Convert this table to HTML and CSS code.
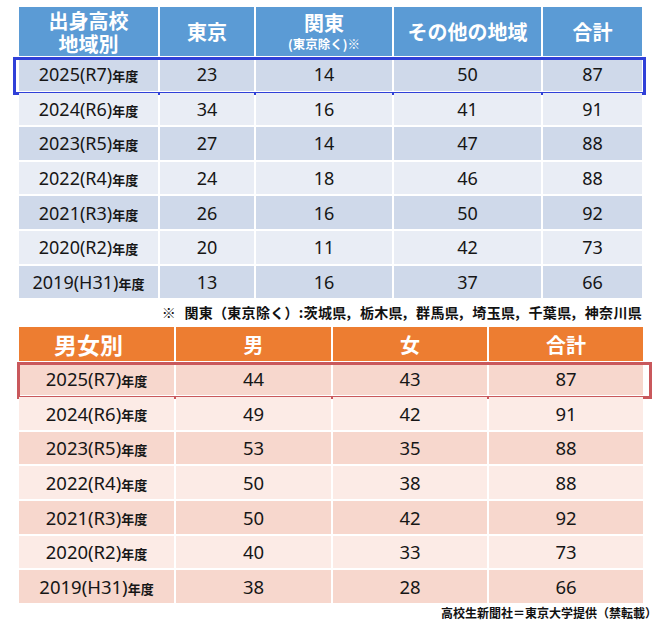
FILE: index.html
```html
<!DOCTYPE html>
<html lang="ja">
<head>
<meta charset="utf-8">
<title>出身高校地域別・男女別</title>
<link rel="stylesheet" href="styles.css">
</head>
<body>
<div class="page">
  <section class="tbl region">
    <div class="row head">
      <div class="cell"><span class="two"><span class="ln">出身高校</span><span class="ln">地域別</span></span></div>
      <div class="cell">東京</div>
      <div class="cell"><span class="two"><span class="ln">関東</span><small>(東京除く)※</small></span></div>
      <div class="cell">その他の地域</div>
      <div class="cell">合計</div>
    </div>
    <div class="row dark hl">
      <div class="cell">2025(R7)<span class="nendo">年度</span></div>
      <div class="cell">23</div><div class="cell">14</div><div class="cell">50</div><div class="cell">87</div>
    </div>
    <div class="row light">
      <div class="cell">2024(R6)<span class="nendo">年度</span></div>
      <div class="cell">34</div><div class="cell">16</div><div class="cell">41</div><div class="cell">91</div>
    </div>
    <div class="row dark">
      <div class="cell">2023(R5)<span class="nendo">年度</span></div>
      <div class="cell">27</div><div class="cell">14</div><div class="cell">47</div><div class="cell">88</div>
    </div>
    <div class="row light">
      <div class="cell">2022(R4)<span class="nendo">年度</span></div>
      <div class="cell">24</div><div class="cell">18</div><div class="cell">46</div><div class="cell">88</div>
    </div>
    <div class="row dark">
      <div class="cell">2021(R3)<span class="nendo">年度</span></div>
      <div class="cell">26</div><div class="cell">16</div><div class="cell">50</div><div class="cell">92</div>
    </div>
    <div class="row light">
      <div class="cell">2020(R2)<span class="nendo">年度</span></div>
      <div class="cell">20</div><div class="cell">11</div><div class="cell">42</div><div class="cell">73</div>
    </div>
    <div class="row dark">
      <div class="cell">2019(H31)<span class="nendo">年度</span></div>
      <div class="cell">13</div><div class="cell">16</div><div class="cell">37</div><div class="cell">66</div>
    </div>
  </section>

  <p class="note">※ 関東（東京除く）:茨城県, 栃木県, 群馬県, 埼玉県, 千葉県, 神奈川県</p>

  <section class="tbl gender">
    <div class="row head">
      <div class="cell big">男女別</div>
      <div class="cell">男</div>
      <div class="cell">女</div>
      <div class="cell">合計</div>
    </div>
    <div class="row dark hl">
      <div class="cell">2025(R7)<span class="nendo">年度</span></div>
      <div class="cell">44</div><div class="cell">43</div><div class="cell">87</div>
    </div>
    <div class="row light">
      <div class="cell">2024(R6)<span class="nendo">年度</span></div>
      <div class="cell">49</div><div class="cell">42</div><div class="cell">91</div>
    </div>
    <div class="row dark">
      <div class="cell">2023(R5)<span class="nendo">年度</span></div>
      <div class="cell">53</div><div class="cell">35</div><div class="cell">88</div>
    </div>
    <div class="row light">
      <div class="cell">2022(R4)<span class="nendo">年度</span></div>
      <div class="cell">50</div><div class="cell">38</div><div class="cell">88</div>
    </div>
    <div class="row dark">
      <div class="cell">2021(R3)<span class="nendo">年度</span></div>
      <div class="cell">50</div><div class="cell">42</div><div class="cell">92</div>
    </div>
    <div class="row light">
      <div class="cell">2020(R2)<span class="nendo">年度</span></div>
      <div class="cell">40</div><div class="cell">33</div><div class="cell">73</div>
    </div>
    <div class="row dark">
      <div class="cell">2019(H31)<span class="nendo">年度</span></div>
      <div class="cell">38</div><div class="cell">28</div><div class="cell">66</div>
    </div>
  </section>

  <p class="credit">高校生新聞社＝東京大学提供（禁転載）</p>
</div>
</body>
</html>
```

FILE: styles.css
```css
* { box-sizing: border-box; }

body {
  margin: 0;
  background: #ffffff;
  font-family: "Noto Sans", "Noto Sans CJK JP", sans-serif;
  color: #161616;
}

.page {
  width: 660px;
  padding: 7px 0 0 19px;
}

.tbl {
  display: flex;
  flex-direction: column;
  gap: 2px;
}

.row {
  position: relative;
  display: grid;
  column-gap: 2px;
  height: 32.6px;
}

.region { width: 623px; }
.region .row { grid-template-columns: 139px 94px 136px 147px 99px; }
.region .row.head { height: 49px; }

.gender { width: 624px; }
.gender .row { grid-template-columns: 155px 155px 154px 154px; height: 32.7px; }
.gender .row.head { height: 33px; }

.cell {
  display: flex;
  align-items: center;
  justify-content: center;
  font-size: 18px;
  white-space: nowrap;
}

.gender .cell { font-size: 18.5px; }

.nendo {
  font-family: "Noto Sans CJK JP", sans-serif;
  font-size: 13px;
  font-weight: 700;
  margin-top: 3px;
}

.head .cell {
  color: #ffffff;
  font-family: "Noto Sans CJK JP", sans-serif;
  font-weight: 700;
  font-size: 20px;
}

.head .two {
  display: flex;
  flex-direction: column;
  align-items: center;
}

.head .ln {
  display: block;
  height: 23px;
  line-height: 23px;
}

.head small {
  display: block;
  font-size: 12.5px;
  line-height: 17px;
  margin-top: 1px;
}

.region .head .cell { background: #5b9bd5; }
.region .dark .cell { background: #cfd9ea; }
.region .light .cell { background: #e9edf5; }

.gender .head .cell { background: #ed7d31; font-size: 20px; }
.gender .head .cell.big { font-size: 23px; padding-right: 16px; }
.gender .dark .cell { background: #f7d7cd; }
.gender .light .cell { background: #fcebe6; }

.region .hl::after {
  content: "";
  position: absolute;
  left: -6px;
  right: -4px;
  top: -1px;
  bottom: -4px;
  border: 3px solid #3040d8;
}

.gender .hl::after {
  content: "";
  position: absolute;
  left: -2px;
  right: -9px;
  top: 0;
  bottom: -4px;
  border: 3px solid #c9585c;
}

.note {
  margin: 0;
  width: 623px;
  height: 29px;
  line-height: 29px;
  text-align: right;
  font-family: "Noto Sans CJK JP", sans-serif;
  font-weight: 700;
  font-size: 14px;
  letter-spacing: 0.3px;
  word-spacing: 5px;
  color: #111;
}

.credit {
  margin: 0;
  width: 638px;
  padding-top: 1px;
  text-align: right;
  font-family: "Noto Sans CJK JP", sans-serif;
  font-weight: 700;
  font-size: 12px;
  line-height: 18px;
  color: #111;
}
```
